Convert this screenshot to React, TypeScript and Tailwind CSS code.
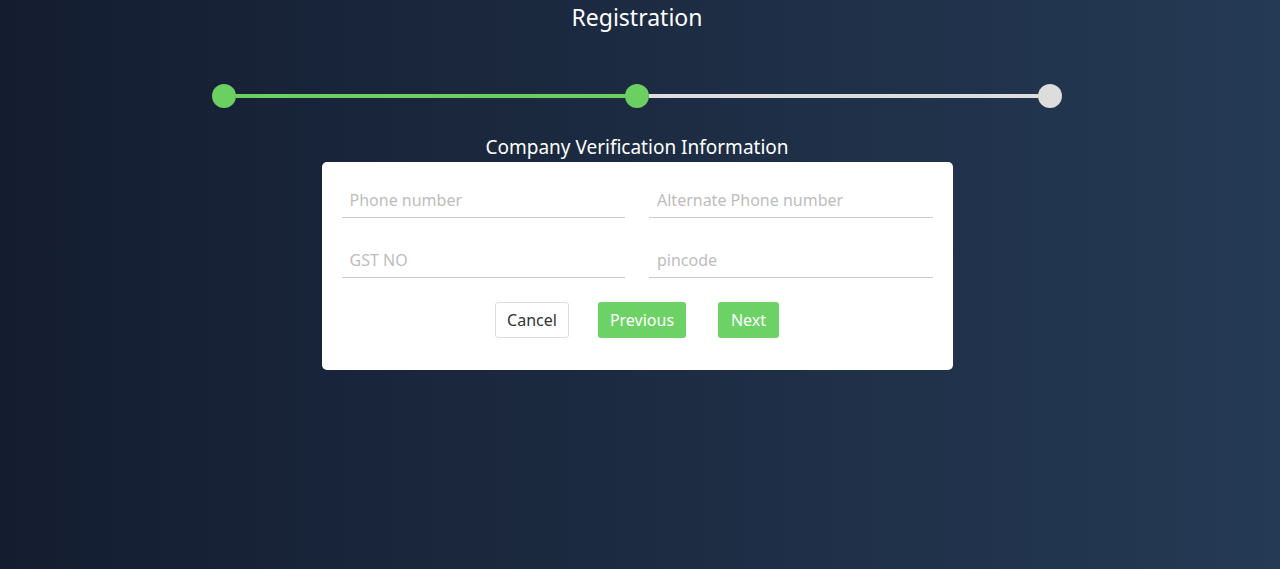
import React from "react";

const font = { fontFamily: '"Noto Sans", "Open Sans", sans-serif' };

function Field({ placeholder }: { placeholder: string }) {
  return (
    <div className="flex-1 h-10 border-b border-[#cccccc] flex items-end pb-[5px] px-2">
      <input
        placeholder={placeholder}
        className="w-full bg-transparent outline-none text-[16px] text-[#333] placeholder:text-[#bdbdbd]"
      />
    </div>
  );
}

export default function App() {
  return (
    <div
      className="w-full h-[569px] bg-gradient-to-r from-[#141d30] to-[#253a55] flex flex-col items-center pr-[6px]"
      style={font}
    >
      <h1 className="text-[23px] leading-[34px] text-white mt-0">Registration</h1>
      <div className="mt-[50px] w-[850px] h-6 flex items-center">
        <div className="w-6 h-6 rounded-full bg-[#6ccf62] shrink-0" />
        <div className="flex-1 h-1 bg-[#6ccf62]" />
        <div className="w-6 h-6 rounded-full bg-[#6ccf62] shrink-0" />
        <div className="flex-1 h-1 bg-[#dddddd]" />
        <div className="w-6 h-6 rounded-full bg-[#dddddd] shrink-0" />
      </div>
      <h2 className="mt-[26px] text-[19px] leading-[26px] text-white">Company Verification Information</h2>
      <div className="mt-[2px] w-[631px] bg-white rounded-[5px] px-5 pt-4 pb-8">
        <div className="flex gap-6">
          <Field placeholder="Phone number" />
          <Field placeholder="Alternate Phone number" />
        </div>
        <div className="flex gap-6 mt-5">
          <Field placeholder="GST NO" />
          <Field placeholder="pincode" />
        </div>
        <div className="flex justify-center mt-6">
          <button className="h-9 w-[74px] border border-[#dddddd] rounded-[3px] text-[16px] text-[#333] bg-white">Cancel</button>
          <button className="ml-[29px] h-9 w-[88px] rounded-[3px] text-[16px] text-white bg-[#6dd266]">Previous</button>
          <button className="ml-[32px] h-9 w-[61px] rounded-[3px] text-[16px] text-white bg-[#6dd266]">Next</button>
        </div>
      </div>
    </div>
  );
}
